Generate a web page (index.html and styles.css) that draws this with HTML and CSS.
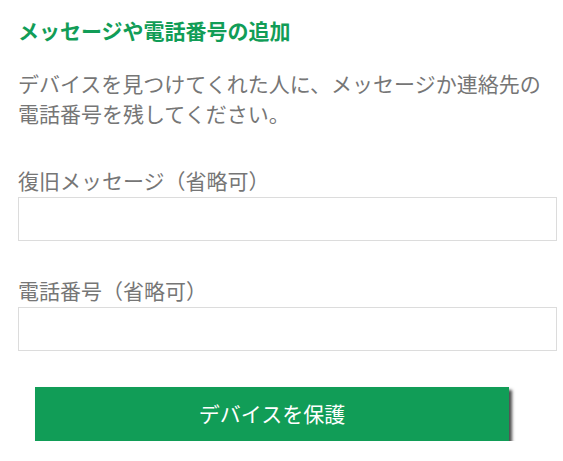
FILE: index.html
```html
<!DOCTYPE html>
<html lang="ja">
<head>
<meta charset="utf-8">
<link rel="stylesheet" href="styles.css">
</head>
<body>
<div class="panel">
  <h2 class="title">メッセージや電話番号の追加</h2>
  <p class="desc">デバイスを見つけてくれた人に、メッセージか連絡先の電話番号を残してください。</p>
  <div class="field">
    <label class="label">復旧メッセージ（省略可）</label>
    <input class="input" type="text">
  </div>
  <div class="field">
    <label class="label">電話番号（省略可）</label>
    <input class="input" type="text">
  </div>
  <div class="actions">
    <button class="btn">デバイスを保護</button>
  </div>
</div>
</body>
</html>
```
FILE: styles.css
```css
html, body {
  margin: 0;
  padding: 0;
  background: #fff;
}
body {
  font-family: "Noto Sans CJK JP", "Noto Sans", sans-serif;
  color: #767676;
}
.panel {
  padding: 15px 6px 0 18px;
  display: flex;
  flex-direction: column;
}
.title {
  margin: 0;
  font-size: 21px;
  line-height: 30px;
  font-weight: bold;
  color: #119d57;
}
.desc {
  margin: 23px 0 0 0;
  font-size: 21px;
  line-height: 30px;
  color: #767676;
}
.field {
  margin-top: 37px;
  display: flex;
  flex-direction: column;
}
.field + .field {
  margin-top: 34px;
}
.label {
  font-size: 21px;
  line-height: 30px;
  color: #767676;
  margin-bottom: 2px;
}
.input {
  box-sizing: border-box;
  width: 539px;
  height: 44px;
  border: 1px solid #dcdcdc;
  margin: 0;
  padding: 0 8px;
  font-size: 18px;
}
.actions {
  margin-top: 36px;
  padding-left: 17px;
}
.btn {
  display: block;
  width: 474px;
  height: 54px;
  border: none;
  background: #119d57;
  color: #fff;
  font-family: "Noto Sans CJK JP", "Noto Sans", sans-serif;
  font-size: 21px;
  box-shadow: 3px 3px 3px rgba(0, 0, 0, 0.7);
  padding: 0 0 3px 0;
}
```
